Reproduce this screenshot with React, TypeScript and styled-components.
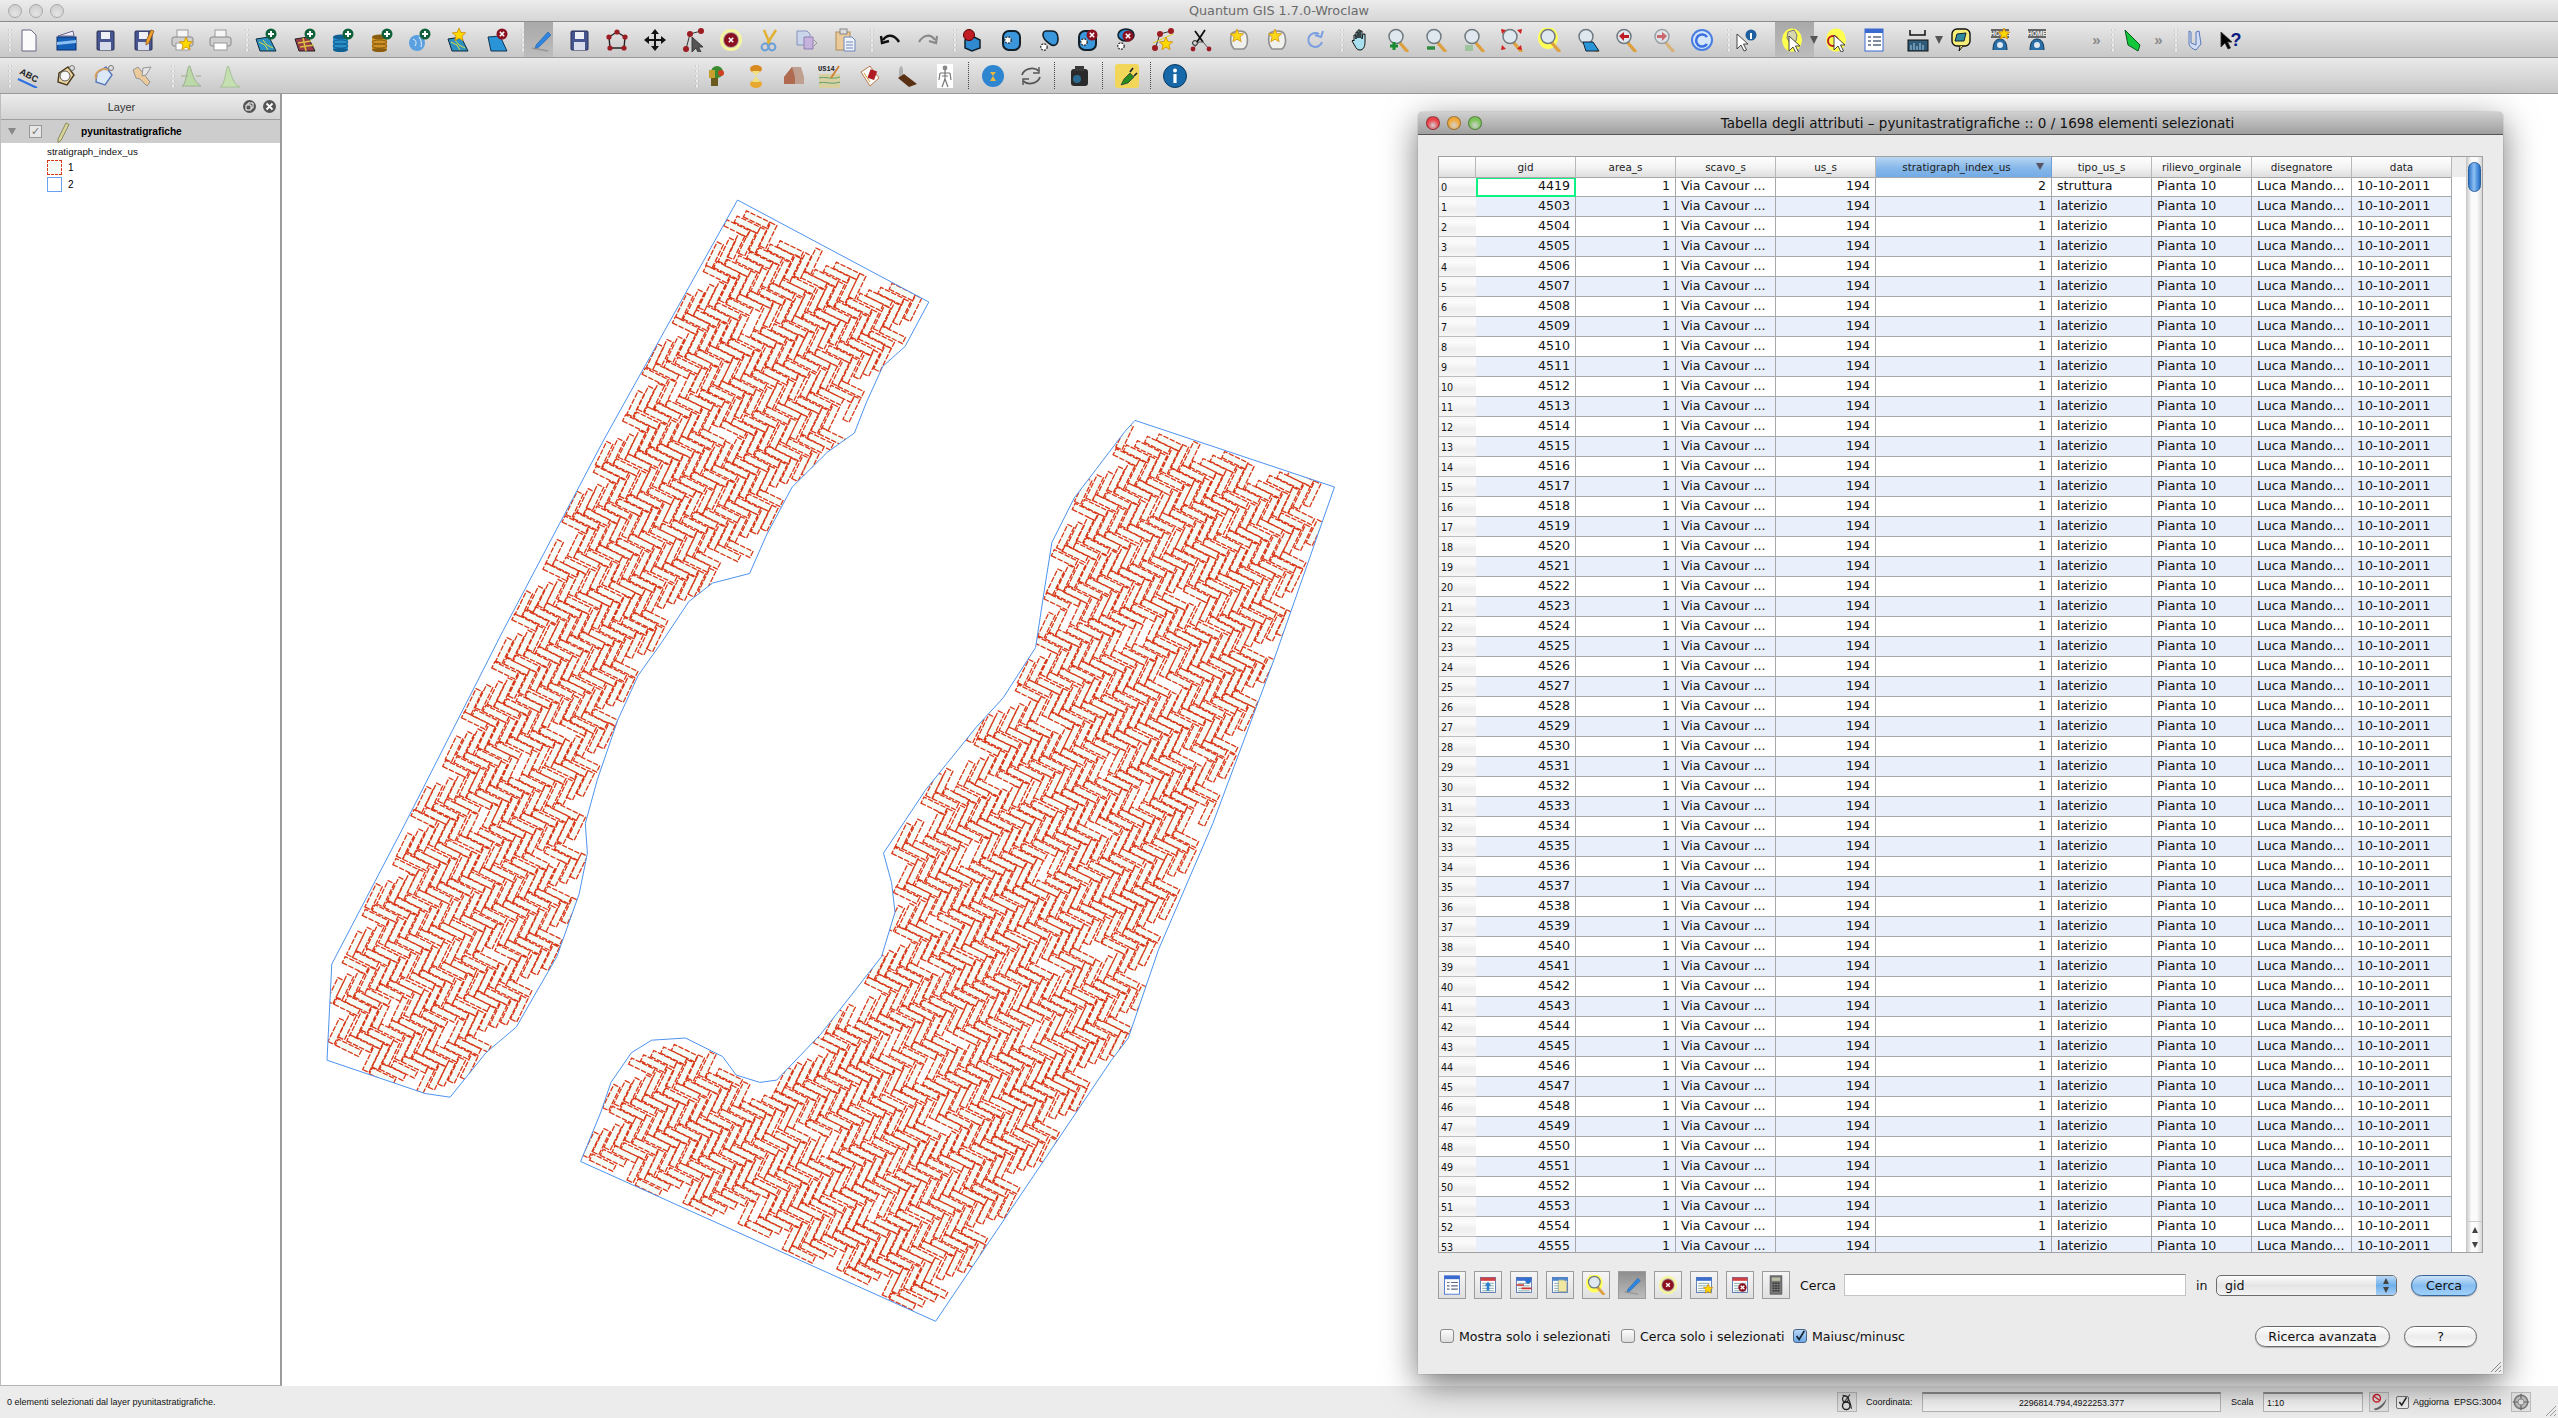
import React from 'react'
import styled, { createGlobalStyle } from 'styled-components'

const GlobalStyle = createGlobalStyle`
  html, body {
    margin: 0;
    padding: 0;
    background: #fff;
  }
`

const Screen = styled.div`
  position: relative;
  width: 2558px;
  height: 1418px;
  overflow: hidden;
  display: flex;
  flex-direction: column;
  font-family: 'Liberation Sans', sans-serif;
  color: #000;
`

const TitleBar = styled.div`
  height: 21px;
  display: flex;
  align-items: center;
  justify-content: center;
  position: relative;
  background: linear-gradient(180deg, #ececec, #d6d6d6);
  border-bottom: 1px solid #8c8c8c;
  font-family: 'DejaVu Sans', sans-serif;
  font-size: 12.8px;
  color: #6a6a6a;
`

const Lights = styled.div`
  position: absolute;
  left: 8px;
  top: 4px;
  display: flex;
  gap: 7px;
`

const Light = styled.span<{ $color?: string }>`
  width: 14px;
  height: 14px;
  border-radius: 50%;
  box-sizing: border-box;
  border: 1px solid ${(p) => (p.$color ? 'rgba(0,0,0,.35)' : '#a9a9a9')};
  background: ${(p) =>
    p.$color
      ? `radial-gradient(circle at 50% 70%, #fff6 0, ${p.$color} 55%, ${p.$color} 100%)`
      : 'radial-gradient(circle at 50% 75%, #e4e4e4, #c9c9c9)'};
`

const Toolbar = styled.div`
  height: 36px;
  box-sizing: border-box;
  display: flex;
  align-items: center;
  padding-left: 9px;
  background: linear-gradient(180deg, #e9e9e9, #c8c8c8);
  border-bottom: 1px solid #9a9a9a;
`

const ToolButton = styled.div<{ $gap: number; $active?: boolean; $extra: number }>`
  flex: none;
  width: ${(p) => 24 + p.$extra}px;
  margin-right: ${(p) => p.$gap - p.$extra}px;
  align-self: stretch;
  display: flex;
  align-items: center;
  box-sizing: border-box;
  ${(p) =>
    p.$active
      ? `background: linear-gradient(180deg,#a9a9a9,#bcbcbc); margin-left: -5px; padding-left: 5px; width: ${29 + p.$extra}px;`
      : ''}
`

const Handle = styled.div`
  flex: none;
  width: 12px;
  height: 24px;
  margin-left: -5px;
  background-image: radial-gradient(circle, #f8f8f8 1px, #a8a8a8 1.4px, transparent 1.8px);
  background-size: 4px 5px;
  background-repeat: repeat-y;
  background-position: center;
`

const Dotted = styled.div<{ $gap: number }>`
  flex: none;
  width: 1px;
  height: 27px;
  margin-right: ${(p) => p.$gap}px;
  border-left: 1px dotted #444;
  box-sizing: border-box;
`

const Chevrons = styled.div<{ $gap: number }>`
  flex: none;
  width: 24px;
  margin-right: ${(p) => p.$gap}px;
  text-align: center;
  font-size: 15px;
  font-weight: bold;
  color: #8a8a8a;
`

const Main = styled.div`
  flex: 1;
  display: flex;
  min-height: 0;
`

const Dock = styled.div`
  width: 282px;
  flex: none;
  box-sizing: border-box;
  display: flex;
  flex-direction: column;
  background: #fff;
  border-right: 2px solid #9b9b9b;
  border-left: 1px solid #bdbdbd;
  border-bottom: 1px solid #b5b5b5;
`

const DockHeader = styled.div`
  height: 26px;
  flex: none;
  box-sizing: border-box;
  display: flex;
  align-items: center;
  padding: 0 4px 0 0;
  background: linear-gradient(180deg, #ececec, #d2d2d2);
  border-bottom: 1px solid #9e9e9e;
  font-size: 11px;
  color: #333;
`

const DockTitle = styled.div`
  flex: 1;
  text-align: center;
  padding-left: 6px;
`

const DockButton = styled.span`
  width: 13px;
  height: 13px;
  margin-left: 7px;
  border-radius: 50%;
  background: #555;
  display: flex;
  align-items: center;
  justify-content: center;
`

const LayerRow = styled.div`
  height: 23px;
  flex: none;
  display: flex;
  align-items: center;
  background: #cdcdcd;
  font-size: 10.2px;
  font-weight: bold;
`

const Triangle = styled.span`
  margin-left: 7px;
  width: 0;
  height: 0;
  border-left: 4.5px solid transparent;
  border-right: 4.5px solid transparent;
  border-top: 7px solid #888;
`

const LayerCheck = styled.span`
  margin-left: 13px;
  width: 13px;
  height: 13px;
  box-sizing: border-box;
  border: 1px solid #999;
  background: #e6e6e6;
  font-size: 11px;
  font-weight: normal;
  line-height: 11px;
  text-align: center;
  color: #777;
`

const LegendTitle = styled.div`
  margin: 2px 0 0 46px;
  height: 14px;
  line-height: 14px;
  font-size: 9.8px;
  color: #111;
`

const LegendRow = styled.div`
  margin-left: 46px;
  height: 17px;
  display: flex;
  align-items: center;
  gap: 6px;
  font-size: 10px;
`

const Swatch = styled.span<{ $red?: boolean }>`
  width: 15px;
  height: 15px;
  box-sizing: border-box;
  background: ${(p) => (p.$red ? '#f5fbf5' : '#fff')};
  border: ${(p) => (p.$red ? '1.5px dashed #d8381a' : '1.5px solid #6aa0ee')};
`

const MapCanvas = styled.div`
  flex: 1;
  background: #fff;
  min-width: 0;
`

const StatusBar = styled.div`
  height: 32px;
  flex: none;
  display: flex;
  align-items: center;
  padding-left: 7px;
  background: #ececec;
  font-size: 9px;
  color: #111;
`

const StatusGroup = styled.div`
  margin-left: auto;
  display: flex;
  align-items: center;
  margin-right: 27px;
`

const StatusIconBox = styled.span<{ $gap: number }>`
  width: 20px;
  height: 20px;
  box-sizing: border-box;
  margin-right: ${(p) => p.$gap}px;
  border: 1px solid #bbb;
  background: #e2e2e2;
  display: flex;
  align-items: center;
  justify-content: center;
`

const StatusLabel = styled.span<{ $width: number }>`
  width: ${(p) => p.$width}px;
  flex: none;
  white-space: nowrap;
`

const StatusInput = styled.div<{ $width: number; $right?: boolean }>`
  width: ${(p) => p.$width}px;
  height: 20px;
  flex: none;
  box-sizing: border-box;
  border: 1px solid #b5b5b5;
  border-top: 2px solid #8e8e8e;
  background: linear-gradient(180deg, #e4e4e4, #f4f4f4 40%);
  line-height: 19px;
  padding: 0 0 0 ${(p) => (p.$right ? 0 : 3)}px;
  text-align: ${(p) => (p.$right ? 'center' : 'left')};
  margin-right: ${(p) => (p.$right ? 10 : 6)}px;
  font-size: 8.8px;
`

const StatusCheck = styled.span`
  width: 13px;
  height: 13px;
  margin-right: 4px;
  box-sizing: border-box;
  border: 1px solid #777;
  border-radius: 2px;
  background: #f2f2f2;
  display: flex;
  align-items: center;
  justify-content: center;
`

const Grip = styled.svg`
  position: absolute;
  right: 1px;
  bottom: 1px;
`

const AttrWindow = styled.div`
  position: absolute;
  left: 1418px;
  top: 112px;
  width: 1085px;
  height: 1262px;
  display: flex;
  flex-direction: column;
  background: #ebebeb;
  border-radius: 5px 5px 0 0;
  box-shadow: 0 10px 34px rgba(0, 0, 0, 0.55), 0 0 1px #555;
  font-family: 'DejaVu Sans', sans-serif;
  font-size: 12.6px;
  color: #111;
`

const WindowTitle = styled.div`
  position: relative;
  height: 22px;
  flex: none;
  display: flex;
  align-items: center;
  justify-content: center;
  padding-left: 34px;
  background: linear-gradient(180deg, #d0d0d0, #9f9f9f);
  border-bottom: 1px solid #555;
  border-radius: 5px 5px 0 0;
  font-size: 13.5px;
  color: #111;
`

const WindowBody = styled.div`
  flex: 1;
  min-height: 0;
  display: flex;
  flex-direction: column;
  padding: 21px 20px 0;
`

const TableFrame = styled.div`
  height: 1097px;
  flex: none;
  display: flex;
  box-sizing: border-box;
  border: 1px solid #a0a0a0;
  background: #fff;
  overflow: hidden;
`

const TableArea = styled.div`
  flex: 1;
  min-width: 0;
  overflow: hidden;
`

const COLUMNS = '37px 100px 100px 100px 100px 176px 100px 100px 100px 100px'

const HeaderRow = styled.div`
  display: grid;
  grid-template-columns: ${COLUMNS} 1fr;
  height: 20px;
  background: #ececec;
`

const HeaderCell = styled.div<{ $sorted?: boolean }>`
  position: relative;
  box-sizing: border-box;
  text-align: center;
  line-height: 20px;
  font-size: 10.4px;
  color: #222;
  padding-right: ${(p) => (p.$sorted ? 14 : 0)}px;
  border-right: 1px solid ${(p) => (p.$sorted ? '#6f9fd6' : '#b8b8b8')};
  border-bottom: 1px solid #a8a8a8;
  background: ${(p) =>
    p.$sorted
      ? 'linear-gradient(180deg, #b9d6f2, #86b8ea 55%, #74abe6)'
      : 'linear-gradient(180deg, #ffffff, #f2f2f2 55%, #dedede)'};
`

const SortMark = styled.span`
  position: absolute;
  right: 7px;
  top: 6px;
  width: 0;
  height: 0;
  border-left: 4px solid transparent;
  border-right: 4px solid transparent;
  border-top: 7px solid #556;
`

const DataRow = styled.div`
  display: grid;
  grid-template-columns: ${COLUMNS};
  height: 20px;
`

const RowHead = styled.div`
  box-sizing: border-box;
  padding: 3px 0 0 2px;
  font-size: 9.6px;
  line-height: 16px;
  color: #111;
  border-bottom: 1px solid #bcbcbc;
  background: linear-gradient(180deg, #f8f8f8, #fbfbfb 30%, #eeeeee 65%, #f6f6f6);
`

const Cell = styled.div<{ $right?: boolean; $alt: boolean; $current?: boolean }>`
  box-sizing: border-box;
  padding: ${(p) => (p.$right ? '0 5px 0 0' : '0 0 0 5px')};
  text-align: ${(p) => (p.$right ? 'right' : 'left')};
  line-height: 18px;
  white-space: nowrap;
  overflow: hidden;
  background: ${(p) => (p.$alt ? '#e9f0fc' : '#fff')};
  border-right: 1px solid #a8a8ac;
  border-bottom: 1px solid #a8a8ac;
  ${(p) => (p.$current ? 'outline: 2px solid #0cf383; outline-offset: -2px;' : '')}
`

const ScrollTrack = styled.div`
  width: 15px;
  flex: none;
  position: relative;
  border-left: 1px solid #c8c8c8;
  background: linear-gradient(90deg, #cfcfcf, #fbfbfb 30%, #fbfbfb 65%, #d6d6d6);
`

const ScrollThumb = styled.div`
  position: absolute;
  left: 1px;
  top: 5px;
  width: 13px;
  height: 30px;
  box-sizing: border-box;
  border: 1px solid #2a5f9f;
  border-radius: 7px;
  background: linear-gradient(90deg, #2f75cc, #8fc1f2 45%, #4f93e0 75%, #2a6cc0);
`

const ScrollArrows = styled.div`
  position: absolute;
  left: 0;
  right: 0;
  bottom: 0;
  height: 30px;
  display: flex;
  flex-direction: column;
  align-items: center;
  justify-content: space-around;
  border-top: 1px solid #ccc;
`

const ScrollArrow = styled.span<{ $down?: boolean }>`
  width: 0;
  height: 0;
  border-left: 3.5px solid transparent;
  border-right: 3.5px solid transparent;
  ${(p) => (p.$down ? 'border-top: 6px solid #444;' : 'border-bottom: 6px solid #444;')}
`

const SearchRow = styled.div`
  display: flex;
  align-items: center;
  height: 28px;
  margin: 18px 6px 0 0;
`

const IconButton = styled.div<{ $active?: boolean }>`
  width: 28px;
  height: 28px;
  flex: none;
  margin-right: 8px;
  box-sizing: border-box;
  display: flex;
  align-items: center;
  justify-content: center;
  border: 1px solid #9c9c9c;
  background: ${(p) =>
    p.$active ? 'linear-gradient(180deg, #8e8e8e, #bcbcbc)' : 'linear-gradient(180deg, #f6f6f6, #dfdfdf)'};
`

const SearchLabel = styled.span<{ $left: number; $width: number }>`
  flex: none;
  width: ${(p) => p.$width}px;
  margin-left: ${(p) => p.$left}px;
`

const SearchInput = styled.div`
  width: 342px;
  height: 22px;
  flex: none;
  box-sizing: border-box;
  background: #fff;
  border: 1px solid #c4c4c4;
  border-top: 1px solid #8d8d8d;
`

const Select = styled.div`
  width: 181px;
  height: 21px;
  flex: none;
  box-sizing: border-box;
  display: flex;
  align-items: center;
  justify-content: space-between;
  margin-right: 14px;
  padding-left: 8px;
  border: 1px solid #6d6d6d;
  border-radius: 5px;
  overflow: hidden;
  background: linear-gradient(180deg, #fdfdfd, #e4e4e4 50%, #f4f4f4);
`

const SelectArrows = styled.span`
  width: 20px;
  height: 100%;
  display: flex;
  flex-direction: column;
  align-items: center;
  justify-content: center;
  gap: 3px;
  background: linear-gradient(180deg, #b9d8f6, #6fb0ec 50%, #a5d0f6);
`

const PillButton = styled.div<{ $primary?: boolean; $width: number; $left?: number }>`
  width: ${(p) => p.$width}px;
  height: 21px;
  flex: none;
  margin-left: ${(p) => p.$left ?? 0}px;
  box-sizing: border-box;
  border: 1px solid ${(p) => (p.$primary ? '#33619a' : '#6a6a6a')};
  border-radius: 11px;
  text-align: center;
  line-height: 19px;
  box-shadow: 0 1px 1px rgba(0, 0, 0, 0.25);
  background: ${(p) =>
    p.$primary
      ? 'linear-gradient(180deg, #cde3f8, #86bdf0 50%, #9fd0f8)'
      : 'linear-gradient(180deg, #ffffff, #ececec 50%, #fafafa)'};
`

const OptionsRow = styled.div`
  display: flex;
  align-items: center;
  height: 22px;
  margin: 26px 6px 0 2px;
`

const CheckOption = styled.label`
  display: flex;
  align-items: center;
  gap: 5px;
`

const CheckBox = styled.span<{ $checked?: boolean }>`
  width: 14px;
  height: 14px;
  flex: none;
  box-sizing: border-box;
  border: 1px solid ${(p) => (p.$checked ? '#47658c' : '#8a8a8a')};
  border-radius: 3px;
  background: ${(p) =>
    p.$checked ? 'linear-gradient(180deg, #b9d6f4, #6ea8e6)' : 'linear-gradient(180deg, #fdfdfd, #dcdcdc)'};
  display: flex;
  align-items: center;
  justify-content: center;
`

const OptionText = styled.span<{ $width: number }>`
  width: ${(p) => p.$width}px;
  white-space: nowrap;
`

const Spacer = styled.div`
  flex: 1;
`

const WindowGrip = styled.svg`
  position: absolute;
  right: 1px;
  bottom: 1px;
`

/* ---- icons ---- */

const star = (cx: number, cy: number, r: number) => {
  const pts: string[] = []
  for (let i = 0; i < 10; i++) {
    const a = -Math.PI / 2 + (i * Math.PI) / 5
    const rr = i % 2 ? r * 0.45 : r
    pts.push(`${(cx + rr * Math.cos(a)).toFixed(1)},${(cy + rr * Math.sin(a)).toFixed(1)}`)
  }
  return pts.join(' ')
}

const Star = ({ x, y, r }: { x: number; y: number; r: number }) => (
  <polygon points={star(x, y, r)} fill="#ffd800" stroke="#d08a00" strokeWidth="0.8" />
)

const Plus = () => (
  <g>
    <circle cx="18" cy="6" r="5.5" fill="#10603a" />
    <path d="M18 3v6M15 6h6" stroke="#fff" strokeWidth="2" />
  </g>
)

const Cross = ({ x = 18, y = 6, r = 5.5 }: { x?: number; y?: number; r?: number }) => (
  <g>
    <circle cx={x} cy={y} r={r} fill="#8a1020" />
    <path d={`M${x - 2.2} ${y - 2.2}l4.4 4.4M${x + 2.2} ${y - 2.2}l-4.4 4.4`} stroke="#fff" strokeWidth="1.6" />
  </g>
)

const Floppy = () => (
  <g>
    <rect x="4" y="3" width="17" height="19" rx="1" fill="#46558f" stroke="#2a2f55" />
    <rect x="8" y="4" width="9" height="7" fill="#eef0f6" />
    <rect x="7" y="14" width="11" height="8" fill="#d8dcea" />
  </g>
)

const Printer = () => (
  <g>
    <rect x="7" y="2" width="11" height="9" fill="#f6f6f6" stroke="#999" />
    <rect x="2" y="9" width="21" height="9" rx="2" fill="#cfcfcf" stroke="#888" />
    <rect x="6" y="15" width="13" height="7" fill="#fff" stroke="#999" />
  </g>
)

const MapSheet = ({ fill = '#2f8fc0' }: { fill?: string }) => (
  <g>
    <polygon points="3,11 16,9 23,23 7,23" fill={fill} stroke="#0d2a3a" />
    <path d="M6 14l6 3 3 5M10 12l4 5 6 3" stroke="#d8e040" fill="none" />
  </g>
)

const Cylinder = ({ c, d }: { c: string; d: string }) => (
  <g>
    <rect x="3" y="9" width="15" height="13" fill={c} />
    <ellipse cx="10.5" cy="22" rx="7.5" ry="2" fill={d} />
    <ellipse cx="10.5" cy="18" rx="7.5" ry="2" fill="none" stroke={d} />
    <ellipse cx="10.5" cy="14" rx="7.5" ry="2" fill="none" stroke={d} />
    <ellipse cx="10.5" cy="9" rx="7.5" ry="2.5" fill={d} />
  </g>
)

const Lens = ({ glow, children }: { glow?: boolean; children?: React.ReactNode }) => (
  <g>
    {glow && <ellipse cx="10" cy="10" rx="10" ry="11" fill="#ffff55" />}
    <line x1="14" y1="15" x2="21" y2="23" stroke="#dda040" strokeWidth="3.4" strokeLinecap="round" />
    <circle cx="10" cy="8.5" r="7" fill="#dfe8ee" stroke="#6f7a80" strokeWidth="1.5" />
    {children}
  </g>
)

const Blob = ({ c = '#3a97dc', x = 4 }: { c?: string; x?: number }) => (
  <rect x={x} y="3" width="17" height="19" rx="6" fill={c} stroke="#10202c" strokeWidth="2" />
)

const Ring = ({ x, y }: { x: number; y: number }) => (
  <circle cx={x} cy={y} r="3.2" fill="#fff" stroke="#222" strokeWidth="1.2" strokeDasharray="2 1" />
)

const Pointer = ({ x = 0, y = 0, f = '#fff' }: { x?: number; y?: number; f?: string }) => (
  <polygon
    transform={`translate(${x} ${y})`}
    points="0,0 0,15 4,11 7,17 9.5,16 6.5,10 11,10"
    fill={f}
    stroke="#333"
    strokeWidth="0.9"
  />
)

const Tbl = ({ head = '#3a6fd0', children }: { head?: string; children?: React.ReactNode }) => (
  <g>
    <rect x="3" y="3" width="18" height="18" fill="#fff" stroke="#4a6aa8" />
    <rect x="3" y="3" width="18" height="4" fill={head} />
    <path d="M5 10h14M5 13h14M5 16h14M5 19h14" stroke="#8aa" strokeWidth="1.2" />
    {children}
  </g>
)

const HomeSign = () => (
  <g>
    <rect x="3" y="1" width="18" height="9" fill="#666" />
    <text x="12" y="8" fontSize="6.5" fontWeight="bold" fontFamily="Liberation Sans" fill="#eee" textAnchor="middle">
      HOME
    </text>
    <path d="M5 22c0-8 3-11 7-11s7 3 7 11" fill="#2a6ea8" stroke="#12395a" />
    <circle cx="12" cy="17" r="3" fill="#dfe8f0" />
  </g>
)

const ICONS: Record<string, React.ReactNode> = {
  new: <path d="M6 2h9l5 5v16H6z" fill="#fbfbfb" stroke="#666687" />,
  open: (
    <g>
      <path d="M4 8l15-5 1 5z" fill="#eef" stroke="#668" />
      <rect x="3" y="9" width="19" height="13" fill="#1560b8" stroke="#0b2f70" />
      <path d="M3 14l19-2v3L3 17z" fill="#8cc0f0" />
    </g>
  ),
  save: <Floppy />,
  saveAs: (
    <g>
      <Floppy />
      <path d="M15 13l5-11 3 1-5 12-3 2z" fill="#f0a030" stroke="#7a4a10" strokeWidth="0.7" />
    </g>
  ),
  printNew: (
    <g>
      <Printer />
      <Star x={16} y={16} r={7} />
    </g>
  ),
  print: <Printer />,
  addVector: (
    <g>
      <MapSheet />
      <Plus />
    </g>
  ),
  addRaster: (
    <g>
      <polygon points="3,11 16,9 23,23 7,23" fill="#9a3b4a" stroke="#222" />
      <path d="M6 15l13-2M8 19l14-2M11 10l3 13" stroke="#d8c040" strokeWidth="1.5" />
      <Plus />
    </g>
  ),
  addDb: (
    <g>
      <Cylinder c="#2a8fc8" d="#0f5f92" />
      <Plus />
    </g>
  ),
  addLite: (
    <g>
      <Cylinder c="#cf9225" d="#8a5c10" />
      <Plus />
    </g>
  ),
  addWms: (
    <g>
      <circle cx="10" cy="15" r="8" fill="#5aa0e0" />
      <path d="M6 11c3 1 4 4 2 7M12 9c2 3 3 6 2 10" stroke="#e8f2fc" fill="none" />
      <Plus />
    </g>
  ),
  newLayer: (
    <g>
      <MapSheet />
      <Star x={14} y={7} r={7} />
    </g>
  ),
  removeLayer: (
    <g>
      <polygon points="4,9 16,8 23,23 7,23" fill="#2a94d8" stroke="#10354f" />
      <Cross />
    </g>
  ),
  edit: (
    <g>
      <path d="M7 17L19 4l3 3-12 12-4 2z" fill="#2f86e0" stroke="#1f5fa8" strokeWidth="0.6" />
      <path d="M3 20l16 3" stroke="#888" strokeWidth="1.5" opacity="0.7" />
    </g>
  ),
  addPoly: (
    <g>
      <polygon points="12,4 20,9 19,20 5,20 4,9" fill="none" stroke="#222" strokeWidth="1.4" />
      {[
        [12, 4],
        [20, 9],
        [19, 20],
        [5, 20],
        [4, 9]
      ].map(([x, y]) => (
        <circle key={x} cx={x} cy={y} r="2.6" fill="#9c1c24" />
      ))}
    </g>
  ),
  move: (
    <path
      d="M12 1l4 5h-3v5h5V8l5 4-5 4v-3h-5v5h3l-4 5-4-5h3v-5H6v3l-5-4 5-4v3h5V6H8z"
      fill="#111"
    />
  ),
  node: (
    <g>
      <path d="M5 21L9 6l11-3" stroke="#333" fill="none" />
      <circle cx="9" cy="6" r="3" fill="#9c1c24" />
      <circle cx="20" cy="3" r="3" fill="#9c1c24" />
      <circle cx="5" cy="21" r="3" fill="#9c1c24" />
      <Pointer x={11} y={9} f="#555" />
    </g>
  ),
  deleteSel: (
    <g>
      <circle cx="12" cy="12" r="11" fill="#f5f5a0" />
      <circle cx="12" cy="12" r="8" fill="#b8a8a8" />
      <Cross x={12} y={12} r={7} />
    </g>
  ),
  cut: (
    <g>
      <path d="M7 2l6 14M19 2l-9 14" stroke="#e0b030" strokeWidth="2.4" />
      <circle cx="8" cy="19" r="3.4" fill="none" stroke="#6a9ed8" strokeWidth="2" />
      <circle cx="15" cy="19" r="3.4" fill="none" stroke="#6a9ed8" strokeWidth="2" />
    </g>
  ),
  copy: (
    <g opacity="0.75">
      <path d="M2 3h10l3 3v11H2z" fill="#c5d4f0" stroke="#6a7ab0" />
      <path d="M9 9h9v12H9z" fill="#c0a8e0" stroke="#7a60a8" />
      <path d="M19 12l3 3-3 3" stroke="#888" fill="none" />
    </g>
  ),
  paste: (
    <g opacity="0.85">
      <rect x="3" y="4" width="14" height="18" fill="#eec890" stroke="#a88040" />
      <rect x="7" y="1" width="7" height="5" fill="#ddd" stroke="#777" />
      <path d="M11 9h8l3 3v11H11z" fill="#f4f8ff" stroke="#5a7ab8" />
      <path d="M13 14h7M13 17h7M13 20h7" stroke="#5a7ab8" />
    </g>
  ),
  undo: <path d="M5 12c4-6 11-6 16 2M3 8l1 7 7-2" fill="none" stroke="#111" strokeWidth="2.4" />,
  redo: <path d="M19 12c-4-6-11-6-16 2M21 8l-1 7-7-2" fill="none" stroke="#888" strokeWidth="2.2" />,
  redoBlue: (
    <path d="M19 14a7 7 0 1 1-3-8M20 3l-2 6-6-2" fill="none" stroke="#7a9ee0" strokeWidth="2" />
  ),
  part: (
    <g>
      <polygon points="11,8 19,12 19,20 11,23 4,20 4,12" fill="#2f8ad0" stroke="#10202c" strokeWidth="1.5" />
      <circle cx="8" cy="7" r="5.5" fill="#c01c24" stroke="#500" />
    </g>
  ),
  ring: (
    <g>
      <Blob />
      <Ring x={9} y={12} />
    </g>
  ),
  fill: (
    <g>
      <path d="M9 3h6c4 0 6 3 6 8 0 6-4 8-8 5-3-2-7-6-7-9 0-2 1-4 3-4z" fill="#3a97dc" stroke="#10202c" strokeWidth="1.6" />
      <Ring x={7} y={19} />
    </g>
  ),
  delRing: (
    <g>
      <Blob />
      <Ring x={9} y={14} />
      <Cross x={17} y={7} />
    </g>
  ),
  delPart: (
    <g>
      <ellipse cx="13" cy="7" rx="8" ry="6" fill="#2f8ad0" stroke="#10202c" strokeWidth="1.6" />
      <Ring x={8} y={18} />
      <Cross x={15} y={8} />
    </g>
  ),
  split: (
    <g>
      <path d="M4 21l5-15 11-3" stroke="#333" fill="none" />
      <circle cx="9" cy="6" r="3" fill="#9c1c24" />
      <circle cx="20" cy="3" r="3" fill="#9c1c24" />
      <circle cx="4" cy="20" r="3" fill="#9c1c24" />
      <path d="M2 15L22 6" stroke="#e0d020" />
      <Star x={15} y={16} r={7} />
    </g>
  ),
  scissors: (
    <g>
      <path d="M6 3l8 11M16 2l-8 12" stroke="#111" strokeWidth="1.8" />
      <circle cx="6" cy="15" r="2.4" fill="none" stroke="#111" />
      <path d="M4 21l6-7 4 0 6 7" stroke="#555" fill="none" />
      <circle cx="4" cy="21" r="2.4" fill="#9c1c24" />
      <circle cx="20" cy="21" r="2.4" fill="#9c1c24" />
    </g>
  ),
  starShape: (
    <g opacity="0.9">
      <path d="M5 5c5-3 14-3 15 3 1 5 1 10-3 13H7C3 17 3 9 5 5z" fill="#f4f4f0" stroke="#888" strokeWidth="1.6" />
      <Star x={10} y={8} r={7} />
    </g>
  ),
  pan: (
    <path
      d="M6 13V7h2v4-7h2v6-8h2v8-7h2v8l1-5h2v8c0 5-2 8-5 8s-4-2-5-4l-3-5 1-1z"
      fill="#a8e0f0"
      stroke="#111"
      strokeWidth="1"
    />
  ),
  zoomIn: (
    <Lens>
      <path d="M6 21h8M10 17v8" stroke="#1a8a30" strokeWidth="3" transform="translate(-2 -3)" />
    </Lens>
  ),
  zoomOut: (
    <Lens>
      <path d="M3 20h8" stroke="#2a8a40" strokeWidth="3.4" />
    </Lens>
  ),
  zoomFull: (
    <Lens>
      <path d="M3 17h8v6H3z" fill="#90c090" opacity="0.8" />
    </Lens>
  ),
  zoomExtent: (
    <Lens>
      <path d="M1 1l5 1-4 4zM22 1l-5 1 4 4zM1 22l5-1-4-4zM22 22l-5-1 4-4z" fill="#d02020" />
    </Lens>
  ),
  zoomSel: <Lens glow />,
  zoomLayer: (
    <Lens>
      <polygon points="7,14 17,14 23,23 10,23" fill="#2a94d8" stroke="#123" />
    </Lens>
  ),
  zoomLast: (
    <Lens>
      <path d="M5 8l5-4v3h5v3h-5v3z" fill="#c01c24" />
    </Lens>
  ),
  zoomNext: (
    <g opacity="0.6">
      <Lens>
        <path d="M15 8l-5-4v3H5v3h5v3z" fill="#c01c24" />
      </Lens>
    </g>
  ),
  refresh: (
    <g>
      <circle cx="12" cy="12" r="10" fill="#d6e6fb" stroke="#4a7fe0" strokeWidth="2" />
      <path d="M17 9a6 6 0 1 0 0 7" fill="none" stroke="#3a70e0" strokeWidth="2.6" />
    </g>
  ),
  identify: (
    <g>
      <Pointer x={2} y={6} />
      <circle cx="16" cy="7" r="5.5" fill="#1f5fa0" />
      <rect x="15" y="5" width="2" height="6" fill="#fff" />
    </g>
  ),
  selectArea: (
    <g>
      <ellipse cx="12" cy="12" rx="10" ry="11.5" fill="#ffff50" />
      <path d="M8 4l6-2 3 5-1 6-6 2-3-5z" fill="#d8d8b0" stroke="#777" />
      <Pointer x={9} y={8} />
    </g>
  ),
  deselect: (
    <g>
      <ellipse cx="12" cy="12" rx="10" ry="11.5" fill="#ffff50" />
      <circle cx="9" cy="13" r="5" fill="none" stroke="#c01c24" strokeWidth="2" />
      <Pointer x={10} y={7} />
    </g>
  ),
  table: (
    <g>
      <rect x="3" y="1" width="18" height="22" fill="#fff" stroke="#3a6ad0" />
      <rect x="3" y="1" width="18" height="4" fill="#3a6ad0" />
      <path d="M6 9h3M11 9h8M6 13h3M11 13h8M6 17h3M11 17h8" stroke="#5a6a80" strokeWidth="1.4" />
    </g>
  ),
  measure: (
    <g>
      <path d="M5 2v5h15V2" fill="none" stroke="#111" strokeWidth="1.5" />
      <rect x="3" y="12" width="20" height="11" fill="#2f5a78" stroke="#111" />
      <path d="M6 22v-5M9 22v-7M12 22v-4M15 22v-7M18 22v-5" stroke="#a8d0e8" />
    </g>
  ),
  annot: (
    <g>
      <rect x="3" y="1" width="18" height="17" rx="5" fill="#f6ee78" stroke="#111" strokeWidth="1.4" />
      <polygon points="8,6 17,5 15,13 6,13" fill="#2f8aa0" stroke="#123" />
      <path d="M11 18l-1 5 4-5" fill="#f6ee78" stroke="#111" />
    </g>
  ),
  homeNew: (
    <g>
      <HomeSign />
      <Star x={16} y={6} r={6} />
    </g>
  ),
  home: <HomeSign />,
  green: <polygon points="6,2 21,17 19,23 9,17" fill="#12c83a" stroke="#085a1c" />,
  shield: <path d="M7 3l2 1v11l5 2V4l3-1 2 13-5 6c-4-1-6-3-7-6z" fill="#d0dcf4" stroke="#5a78b8" />,
  help: (
    <g>
      <Pointer x={1} y={4} f="#000" />
      <text x="16" y="18" fontSize="18" fontWeight="bold" fontFamily="Liberation Sans" fill="#0a1a80" textAnchor="middle">
        ?
      </text>
    </g>
  ),
  abc: (
    <g>
      <text x="3" y="14" fontSize="9" fontWeight="bold" fontFamily="Liberation Sans" fill="#222" transform="rotate(28 12 12)">
        ABC
      </text>
      <path d="M2 15l19 9" stroke="#2a70e0" strokeWidth="2" />
    </g>
  ),
  labelA: (
    <g>
      <path d="M6 9l9-6 6 8-7 10-9-3z" fill="#f0d8a0" stroke="#4a3a20" strokeWidth="1.4" />
      <circle cx="12" cy="12" r="5" fill="#f6f6f6" stroke="#555" />
      <circle cx="19" cy="4" r="2.5" fill="none" stroke="#777" />
    </g>
  ),
  labelB: (
    <g>
      <path d="M6 9l9-6 6 8-7 10-9-3z" fill="#dbe8f8" stroke="#5a78b8" strokeWidth="1.4" />
      <path d="M5 15c-2-7 6-12 12-9" fill="none" stroke="#d8a060" strokeWidth="2" />
      <circle cx="20" cy="4" r="2.5" fill="none" stroke="#777" />
    </g>
  ),
  labelC: (
    <g opacity="0.85">
      <path d="M3 6l5-3 5 6 7 9-3 4-7-7-4-1z" fill="#f0c890" stroke="#888" />
      <path d="M13 4l8-1-5 8-4 1z" fill="#e8e8e8" stroke="#888" />
    </g>
  ),
  histA: (
    <path
      d="M3 22c4 0 5-18 7-20s3 16 12 20z M2 12h7M17 12h5"
      fill="#bcd9a8"
      stroke="#9ab090"
      strokeWidth="1"
    />
  ),
  histB: <path d="M3 23c5 0 6-21 8-21s3 18 12 21z" fill="#c5e0b0" stroke="#a8c098" />,
  tree: (
    <g>
      <rect x="8" y="8" width="7" height="14" fill="#6a5a20" />
      <circle cx="14" cy="8" r="6" fill="#3a8a30" />
      <circle cx="18" cy="9" r="3" fill="#d04020" />
      <rect x="6" y="6" width="6" height="8" fill="#c8a030" />
    </g>
  ),
  hourglass: (
    <g>
      <ellipse cx="12" cy="5" rx="6" ry="4" fill="#d88a20" />
      <ellipse cx="12" cy="20" rx="6" ry="4" fill="#e8a830" />
      <path d="M8 7l4 5 4-5M8 18l4-6 4 6" fill="#f0e080" />
    </g>
  ),
  house: (
    <g>
      <polygon points="3,13 11,3 20,3 23,13 23,20 3,20" fill="#bfa090" />
      <polygon points="3,13 11,3 14,13 14,20 3,20" fill="#b06a50" />
    </g>
  ),
  us14: (
    <g>
      <text x="0" y="7" fontSize="7" fontWeight="bold" fontFamily="Liberation Mono" fill="#222">
        US14
      </text>
      <rect x="1" y="10" width="21" height="14" fill="#d8d0a0" />
      <path d="M1 14c6-2 12 2 21-1M1 19c6-2 12 2 21-1" stroke="#5aa070" fill="none" />
      <path d="M13 14L21 2" stroke="#d08030" strokeWidth="1.8" />
    </g>
  ),
  cards: (
    <g>
      <polygon points="3,8 12,2 21,14 12,22" fill="#fafafa" stroke="#b87a50" />
      <rect x="11" y="6" width="7" height="9" fill="#b01c24" transform="rotate(20 14 10)" />
      <path d="M6 9l6 9" stroke="#d0a030" />
    </g>
  ),
  trowel: (
    <g>
      <path d="M8 2c-2 0-3 2-3 6v6h4V6z" fill="#b0b0b0" />
      <polygon points="4,14 10,10 23,20 15,23" fill="#5a3015" />
    </g>
  ),
  skeleton: (
    <g>
      <rect x="4" y="0" width="16" height="24" fill="#fff" />
      <circle cx="12" cy="4" r="2.4" fill="#888" />
      <path d="M12 6v9M7 9h10M7 9l-1 7M17 9l1 7M12 15l-3 8M12 15l3 8M9 12h6" stroke="#777" fill="none" strokeWidth="1.2" />
    </g>
  ),
  globeWait: (
    <g>
      <circle cx="12" cy="12" r="11" fill="#2f86d0" />
      <path d="M9 8h6l-3 4 3 5H9l3-5z" fill="#e8b840" />
    </g>
  ),
  sync: (
    <g>
      <path d="M3 11c2-6 11-9 17-4M21 13c-2 6-11 9-17 4" fill="none" stroke="#555" strokeWidth="1.8" />
      <path d="M20 3v6h-6M4 21v-6h6" fill="none" stroke="#555" strokeWidth="1.4" />
    </g>
  ),
  camera: (
    <g>
      <rect x="4" y="5" width="17" height="17" rx="3" fill="#2a2a2a" />
      <rect x="8" y="2" width="9" height="5" fill="#3a3a3a" />
      <circle cx="10" cy="15" r="4" fill="#2a6a90" />
    </g>
  ),
  plug: (
    <g>
      <rect x="0" y="0" width="24" height="24" rx="3" fill="#f2d65a" />
      <path d="M6 21l3-6 6-6 4 4-6 6z" fill="#2a8a20" stroke="#123" strokeWidth="0.6" />
      <path d="M15 8l3-4M19 12l3-3" stroke="#123" strokeWidth="1.6" />
    </g>
  ),
  info: (
    <g>
      <circle cx="12" cy="12" r="11.5" fill="#1668a8" stroke="#0a3a60" />
      <rect x="10.4" y="10" width="3.2" height="9" fill="#fff" />
      <circle cx="12" cy="6.6" r="2" fill="#fff" />
    </g>
  ),
  tblUp: (
    <Tbl head="#d04040">
      <path d="M12 8l4 5h-2.4v6h-3.2v-6H8z" fill="#2a80d0" />
    </Tbl>
  ),
  tblSwap: (
    <Tbl head="#3a6fd0">
      <path d="M3 12h9M9 16h12" stroke="#d03030" strokeWidth="2" />
      <circle cx="17" cy="7" r="3.4" fill="#2a70d0" />
    </Tbl>
  ),
  tblCopy: (
    <Tbl head="#4a86d0">
      <path d="M10 6h7l3 3v11H10z" fill="#f0e8a0" stroke="#9a9" />
    </Tbl>
  ),
  tblNew: (
    <Tbl>
      <Star x={17} y={17} r={6} />
    </Tbl>
  ),
  tblDel: (
    <Tbl head="#d04040">
      <Cross x={15} y={15} r={5} />
    </Tbl>
  ),
  calc: (
    <g>
      <rect x="5" y="1" width="14" height="22" fill="#777" stroke="#555" />
      <rect x="7" y="3" width="10" height="4" fill="#b8c0a8" />
      <path d="M8 10h8M8 13h8M8 16h8M8 19h8" stroke="#333" strokeWidth="1.8" strokeDasharray="2 1" />
    </g>
  ),
  gps: (
    <g>
      <path d="M6 3c8 0 10 8 12 18M16 2L7 14" stroke="#333" strokeWidth="1.6" fill="none" />
      <circle cx="10" cy="8" r="4" fill="none" stroke="#333" strokeWidth="1.6" />
      <circle cx="11" cy="17" r="5" fill="none" stroke="#222" strokeWidth="1.8" />
    </g>
  ),
  noRender: (
    <g>
      <path d="M5 21c6-1 13-6 17-14-1 8-7 15-15 16z" fill="#666" />
      <circle cx="9" cy="7" r="5" fill="none" stroke="#d02030" strokeWidth="1.8" />
      <path d="M5 4l8 6" stroke="#d02030" strokeWidth="1.8" />
    </g>
  ),
  crs: (
    <g>
      <circle cx="12" cy="12" r="9" fill="#bbb" stroke="#777" strokeWidth="2" />
      <path d="M12 1v22M1 12h22" stroke="#666" strokeWidth="1.6" />
      <circle cx="12" cy="12" r="4" fill="#ddd" stroke="#777" />
    </g>
  )
}

const Glyph = ({ name, size = 24 }: { name: string; size?: number }) => (
  <svg width={size} height={size} viewBox="0 0 24 24" style={{ flex: 'none', display: 'block' }}>
    {ICONS[name]}
  </svg>
)

/* ---- toolbars ---- */

type Tool = { icon?: string; gap?: number; active?: boolean; arrow?: boolean; kind?: 'handle' | 'dots' | 'more' }

const names = (list: string, gap: number): Tool[] =>
  list.split(' ').map((n) => (n === '|' ? { kind: 'handle' } : { icon: n, gap }))

const topTools: Tool[] = [
  ...names('| new open save saveAs printNew print | addVector addRaster addDb addLite addWms newLayer removeLayer |', 14.4),
  { icon: 'edit', active: true, gap: 14.4 },
  ...names('save addPoly move node deleteSel cut copy paste | undo redo |', 14),
  ...names('part ring fill delRing delPart split scissors starShape starShape redoBlue | pan zoomIn zoomOut zoomFull zoomExtent zoomSel zoomLayer zoomLast zoomNext refresh |', 14),
  { icon: 'identify', gap: 21 },
  { icon: 'selectArea', active: true, arrow: true, gap: 20 },
  { icon: 'deselect', gap: 14 },
  { icon: 'table', gap: 19 },
  { icon: 'measure', arrow: true, gap: 20 },
  { icon: 'annot', gap: 15 },
  { icon: 'homeNew', gap: 13 },
  { icon: 'home', gap: 35 },
  { kind: 'more', gap: 4 },
  { kind: 'handle' },
  { icon: 'green', gap: 3 },
  { kind: 'more', gap: 5 },
  { kind: 'handle' },
  { icon: 'shield', gap: 14 },
  { icon: 'help' }
]

const secondTools: Tool[] = [
  { kind: 'handle' },
  { icon: 'abc', gap: 13 },
  { icon: 'labelA', gap: 14.4 },
  { icon: 'labelB', gap: 14.4 },
  { icon: 'labelC', gap: 18 },
  { kind: 'handle' },
  { icon: 'histA', gap: 14 },
  { icon: 'histB', gap: 455 },
  { kind: 'handle' },
  { icon: 'tree', gap: 17 },
  { icon: 'hourglass', gap: 13 },
  { icon: 'house', gap: 13 },
  { icon: 'us14', gap: 16 },
  { icon: 'cards', gap: 12 },
  { icon: 'trowel', gap: 15 },
  { icon: 'skeleton', gap: 11 },
  { kind: 'dots', gap: 12 },
  { icon: 'globeWait', gap: 14 },
  { icon: 'sync', gap: 11 },
  { kind: 'dots', gap: 12 },
  { icon: 'camera', gap: 11 },
  { kind: 'dots', gap: 12 },
  { icon: 'plug', gap: 11 },
  { kind: 'dots', gap: 12 },
  { icon: 'info' }
]

const ArrowMark = styled.span`
  flex: none;
  margin-left: 6px;
  width: 0;
  height: 0;
  border-left: 4px solid transparent;
  border-right: 4px solid transparent;
  border-top: 8px solid #555;
`

const ToolRow = ({ tools }: { tools: Tool[] }) => (
  <Toolbar>
    {tools.map((t, i) => {
      if (t.kind === 'handle') return <Handle key={i} />
      if (t.kind === 'dots') return <Dotted key={i} $gap={t.gap ?? 10} />
      if (t.kind === 'more') return <Chevrons key={i} $gap={t.gap ?? 0}>»</Chevrons>
      return (
        <ToolButton key={i} $gap={t.gap ?? 14.4} $active={t.active} $extra={t.arrow ? 10 : 0}>
          <Glyph name={t.icon as string} />
          {t.arrow && <ArrowMark />}
        </ToolButton>
      )
    })}
  </Toolbar>
)

/* ---- map: two polygons filled with herringbone bricks ---- */

const toMap = (pts: number[][]) => pts.map(([x, y]) => [300 + x / 1.479 - 282, 180 + y / 1.352 - 94])

const LEFT_SHAPE = toMap([
  [647, 27], [930, 165], [895, 225], [862, 252], [838, 300], [820, 342], [780, 368], [728, 415],
  [690, 480], [665, 532], [610, 545], [575, 570], [535, 625], [500, 670], [470, 730], [440, 810],
  [422, 870], [425, 910], [413, 965], [380, 1050], [345, 1105], [320, 1145], [275, 1180], [222, 1240],
  [185, 1235], [40, 1190], [47, 1060], [150, 880], [300, 610], [450, 350]
])

const RIGHT_SHAPE = toMap([
  [1235, 325], [1530, 415], [1440, 650], [1350, 870], [1270, 1040], [1225, 1160], [1200, 1190],
  [940, 1543], [415, 1327], [445, 1260], [460, 1220], [490, 1180], [520, 1163], [570, 1160],
  [625, 1185], [645, 1210], [680, 1220], [705, 1217], [770, 1155], [860, 1050], [880, 990],
  [875, 950], [863, 910], [925, 825], [1000, 740], [1040, 700], [1088, 632], [1100, 560],
  [1112, 490], [1145, 430], [1220, 340]
])

const inside = (poly: number[][], x: number, y: number) => {
  let hit = false
  for (let i = 0, j = poly.length - 1; i < poly.length; j = i++) {
    const [xi, yi] = poly[i]
    const [xj, yj] = poly[j]
    if (yi > y !== yj > y && x < ((xj - xi) * (y - yi)) / (yj - yi) + xi) hit = !hit
  }
  return hit
}

const brickPath = () => {
  const L = 27
  const W = 8
  const theta = (26 * Math.PI) / 180
  const c = Math.cos(theta)
  const s = Math.sin(theta)
  let seed = 7
  const rnd = () => {
    seed = (seed * 16807) % 2147483647
    return seed / 2147483647
  }
  const parts: string[] = []
  const place = (x0: number, y0: number, w: number, h: number) => {
    const j = () => (rnd() - 0.5) * 2
    const dx = j()
    const dy = j()
    // y is mirrored so the stair of the herringbone climbs to the right
    const corners = [
      [x0 + 0.6, y0 + 0.6],
      [x0 + w - 0.6, y0 + 0.6],
      [x0 + w - 0.6, y0 + h - 0.6],
      [x0 + 0.6, y0 + h - 0.6]
    ].map(([x, y]) => [x * c + y * s + dx, x * s - y * c + dy])
    const count = (poly: number[][]) => corners.filter(([x, y]) => inside(poly, x, y)).length
    if (count(LEFT_SHAPE) < 3 && count(RIGHT_SHAPE) < 3) return
    if (rnd() < 0.025) return
    parts.push(`M${corners.map(([x, y]) => `${x.toFixed(1)} ${y.toFixed(1)}`).join('L')}Z`)
  }
  for (let i = -220; i < 260; i++) {
    for (let k = -80; k < 80; k++) {
      const x = i * W + k * L
      const y = i * W - k * L
      if (x < -200 || x > 2400 || y < -2000 || y > 1500) continue
      place(x, y, L, W)
      place(x + L, y + W - L, W, L)
    }
  }
  return parts.join('')
}

const BRICKS = brickPath()
const outline = (pts: number[][]) => pts.map(([x, y]) => `${x.toFixed(1)},${y.toFixed(1)}`).join(' ')

const MapDrawing = () => (
  <svg width="2276" height="1292" style={{ display: 'block' }}>
    <defs>
      <clipPath id="site">
        <polygon points={outline(LEFT_SHAPE)} />
        <polygon points={outline(RIGHT_SHAPE)} />
      </clipPath>
    </defs>
    <path
      d={BRICKS}
      clipPath="url(#site)"
      fill="#f5fbf5"
      stroke="#d8381a"
      strokeWidth="1.3"
      strokeDasharray="5.5 1.4"
    />
    <polygon points={outline(LEFT_SHAPE)} fill="none" stroke="#4d93ee" strokeWidth="1" />
    <polygon points={outline(RIGHT_SHAPE)} fill="none" stroke="#4d93ee" strokeWidth="1" />
  </svg>
)

/* ---- attribute table ---- */

const HEADERS = [
  'gid',
  'area_s',
  'scavo_s',
  'us_s',
  'stratigraph_index_us',
  'tipo_us_s',
  'rilievo_orginale',
  'disegnatore',
  'data'
]

const ROWS = Array.from({ length: 54 }, (_, i) => ({
  index: i,
  gid: i === 0 ? 4419 : 4502 + i,
  strat: i === 0 ? 2 : 1,
  tipo: i === 0 ? 'struttura' : 'laterizio'
}))

const WINDOW_TOOLS = ['table', 'tblUp', 'tblSwap', 'tblCopy', 'zoomSel', 'edit', 'deleteSel', 'tblNew', 'tblDel', 'calc']

const AttributeTable = () => (
  <TableFrame>
    <TableArea>
      <HeaderRow>
        <HeaderCell />
        {HEADERS.map((h) => (
          <HeaderCell key={h} $sorted={h === 'stratigraph_index_us'}>
            {h}
            {h === 'stratigraph_index_us' && <SortMark />}
          </HeaderCell>
        ))}
      </HeaderRow>
      {ROWS.map((r) => {
        const alt = r.index % 2 === 1
        return (
          <DataRow key={r.index}>
            <RowHead>{r.index}</RowHead>
            <Cell $right $alt={alt} $current={r.index === 0}>
              {r.gid}
            </Cell>
            <Cell $right $alt={alt}>1</Cell>
            <Cell $alt={alt}>Via Cavour ...</Cell>
            <Cell $right $alt={alt}>194</Cell>
            <Cell $right $alt={alt}>{r.strat}</Cell>
            <Cell $alt={alt}>{r.tipo}</Cell>
            <Cell $alt={alt}>Pianta 10</Cell>
            <Cell $alt={alt}>Luca Mando...</Cell>
            <Cell $alt={alt}>10-10-2011</Cell>
          </DataRow>
        )
      })}
    </TableArea>
    <ScrollTrack>
      <ScrollThumb />
      <ScrollArrows>
        <ScrollArrow />
        <ScrollArrow $down />
      </ScrollArrows>
    </ScrollTrack>
  </TableFrame>
)

const Tick = ({ size = 14, color = '#123' }: { size?: number; color?: string }) => (
  <svg width={size} height={size} viewBox="0 0 14 14">
    <path d="M3 7l3 4 6-10" fill="none" stroke={color} strokeWidth="2" />
  </svg>
)

const AttributeWindow = () => (
  <AttrWindow>
    <WindowTitle>
      <Lights>
        <Light $color="#e8434a" />
        <Light $color="#f0a93c" />
        <Light $color="#7cc35a" />
      </Lights>
      Tabella degli attributi – pyunitastratigrafiche :: 0 / 1698 elementi selezionati
    </WindowTitle>
    <WindowBody>
      <AttributeTable />
      <SearchRow>
        {WINDOW_TOOLS.map((t) => (
          <IconButton key={t} $active={t === 'edit'}>
            <Glyph name={t} size={20} />
          </IconButton>
        ))}
        <SearchLabel $left={2} $width={44}>Cerca</SearchLabel>
        <SearchInput />
        <SearchLabel $left={10} $width={20}>in</SearchLabel>
        <Select>
          gid
          <SelectArrows>
            <ScrollArrow />
            <ScrollArrow $down />
          </SelectArrows>
        </Select>
        <PillButton $primary $width={66}>Cerca</PillButton>
      </SearchRow>
      <OptionsRow>
        <CheckOption>
          <CheckBox />
          <OptionText $width={162}>Mostra solo i selezionati</OptionText>
        </CheckOption>
        <CheckOption>
          <CheckBox />
          <OptionText $width={153}>Cerca solo i selezionati</OptionText>
        </CheckOption>
        <CheckOption>
          <CheckBox $checked>
            <Tick />
          </CheckBox>
          <OptionText $width={120}>Maiusc/minusc</OptionText>
        </CheckOption>
        <Spacer />
        <PillButton $width={135}>Ricerca avanzata</PillButton>
        <PillButton $width={73} $left={14}>?</PillButton>
      </OptionsRow>
    </WindowBody>
    <WindowGrip width="13" height="13" viewBox="0 0 13 13">
      <path d="M12 2L2 12M12 6l-6 6M12 10l-2 2" stroke="#8a8a8a" />
    </WindowGrip>
  </AttrWindow>
)

export default function App() {
  return (
    <Screen>
      <GlobalStyle />
      <TitleBar>
        <Lights>
          <Light />
          <Light />
          <Light />
        </Lights>
        Quantum GIS 1.7.0-Wroclaw
      </TitleBar>
      <ToolRow tools={topTools} />
      <ToolRow tools={secondTools} />
      <Main>
        <Dock>
          <DockHeader>
            <DockTitle>Layer</DockTitle>
            <DockButton>
              <svg width="9" height="9" viewBox="0 0 9 9">
                <path d="M1 3h5v5H1zM3 3V1h5v5H6" fill="none" stroke="#fff" />
              </svg>
            </DockButton>
            <DockButton>
              <svg width="9" height="9" viewBox="0 0 9 9">
                <path d="M1.5 1.5l6 6M7.5 1.5l-6 6" stroke="#fff" strokeWidth="1.8" />
              </svg>
            </DockButton>
          </DockHeader>
          <LayerRow>
            <Triangle />
            <LayerCheck>✓</LayerCheck>
            <svg width="16" height="22" viewBox="0 0 16 22" style={{ margin: '0 10px 0 13px' }}>
              <path d="M3 18L11 2l3 1.5-8 16-3 2z" fill="#d8d49a" stroke="#8a8a60" />
            </svg>
            pyunitastratigrafiche
          </LayerRow>
          <LegendTitle>stratigraph_index_us</LegendTitle>
          <LegendRow>
            <Swatch $red />1
          </LegendRow>
          <LegendRow>
            <Swatch />2
          </LegendRow>
        </Dock>
        <MapCanvas>
          <MapDrawing />
        </MapCanvas>
      </Main>
      <StatusBar>
        0 elementi selezionati dal layer pyunitastratigrafiche.
        <StatusGroup>
          <StatusIconBox $gap={9}>
            <Glyph name="gps" size={18} />
          </StatusIconBox>
          <StatusLabel $width={56}>Coordinata:</StatusLabel>
          <StatusInput $width={299} $right>2296814.794,4922253.377</StatusInput>
          <StatusLabel $width={32}>Scala</StatusLabel>
          <StatusInput $width={100}>1:10</StatusInput>
          <StatusIconBox $gap={7}>
            <Glyph name="noRender" size={18} />
          </StatusIconBox>
          <StatusCheck>
            <Tick size={12} color="#222" />
          </StatusCheck>
          <StatusLabel $width={41}>Aggiorna</StatusLabel>
          <StatusLabel $width={57}>EPSG:3004</StatusLabel>
          <StatusIconBox $gap={0}>
            <Glyph name="crs" size={18} />
          </StatusIconBox>
        </StatusGroup>
        <Grip width="13" height="13" viewBox="0 0 13 13">
          <path d="M12 2L2 12M12 6l-6 6M12 10l-2 2" stroke="#999" />
        </Grip>
      </StatusBar>
      <AttributeWindow />
    </Screen>
  )
}
